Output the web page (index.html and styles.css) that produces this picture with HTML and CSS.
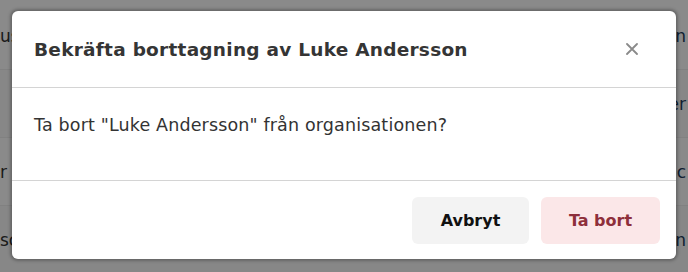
FILE: index.html
```html
<!DOCTYPE html>
<html>
<head>
<title>Bekräfta borttagning</title>
<link rel="stylesheet" href="styles.css">
</head>
<body>

<div class="page">
  <div class="row"><span class="left">us</span><span class="right">n</span></div>
  <div class="row"><span class="left"></span><span class="right">er</span></div>
  <div class="row"><span class="left">r</span><span class="right">c</span></div>
  <div class="row"><span class="left">sc</span><span class="right">n</span></div>
</div>

<div class="overlay"></div>

<div class="modal">
  <div class="modal-header">
    <h2 class="title">Bekräfta borttagning av Luke Andersson</h2>
    <button class="close" aria-label="Stäng">
      <svg width="12" height="12" viewBox="0 0 12 12"><path d="M1 1 L11 11 M11 1 L1 11" stroke="#8a8a8a" stroke-width="1.8" stroke-linecap="round"/></svg>
    </button>
  </div>
  <div class="modal-body">
    <p>Ta bort "Luke Andersson" från organisationen?</p>
  </div>
  <div class="modal-footer">
    <button class="btn btn-cancel">Avbryt</button>
    <button class="btn btn-danger">Ta bort</button>
  </div>
</div>

</body>
</html>
```

FILE: styles.css
```css
html {
  background-color: white;
}

body {
  margin: 0px;
  width: 688px;
  height: 272px;
  overflow: hidden;
  position: relative;
  font-family: "DejaVu Sans", sans-serif;
}

.page {
  padding-top: 2px;
}

.row {
  display: flex;
  justify-content: space-between;
  align-items: center;
  height: 67px;
  border-bottom: 1px solid #eeeeee;
  font-size: 17px;
}

.row:nth-child(even) {
  background-color: #fafafa;
}

.left {
  color: #333333;
}

.right {
  color: #1d3a5c;
  padding-right: 2px;
}

.overlay {
  position: absolute;
  top: 0;
  left: 0;
  right: 0;
  bottom: 0;
  background-color: rgba(0, 0, 0, 0.46);
}

.modal {
  position: absolute;
  top: 11px;
  left: 12px;
  width: 664px;
  background-color: white;
  border-radius: 6px;
  box-shadow: 0 0 3px 2px rgba(0, 0, 0, 0.25);
  color: #333333;
}

.modal-header {
  display: flex;
  align-items: center;
  justify-content: space-between;
  height: 76px;
  padding: 0 38px 0 22px;
  border-bottom: 1px solid #d4d4d4;
}

.title {
  margin: 0;
  font-size: 18.5px;
  font-weight: 700;
  letter-spacing: 0.25px;
  color: #353535;
}

.close {
  border: 0;
  background: transparent;
  padding: 0;
  width: 12px;
  height: 12px;
  display: flex;
}

.modal-body {
  height: 92px;
  padding: 0 22px;
  border-bottom: 1px solid #d4d4d4;
}

.modal-body p {
  margin: 0;
  padding-top: 25px;
  font-size: 17.5px;
  letter-spacing: 0.15px;
  line-height: 24px;
  color: #333333;
}

.modal-footer {
  display: flex;
  justify-content: flex-end;
  gap: 12px;
  padding: 16px 16px 15px;
}

.btn {
  border: 0;
  border-radius: 6px;
  height: 47px;
  font-family: "DejaVu Sans", sans-serif;
  font-size: 16px;
  font-weight: 700;
  cursor: pointer;
}

.btn-cancel {
  width: 117px;
  background-color: #f3f3f3;
  color: #111111;
}

.btn-danger {
  width: 119px;
  background-color: #fbe7e8;
  color: #8e2f3b;
}
```
